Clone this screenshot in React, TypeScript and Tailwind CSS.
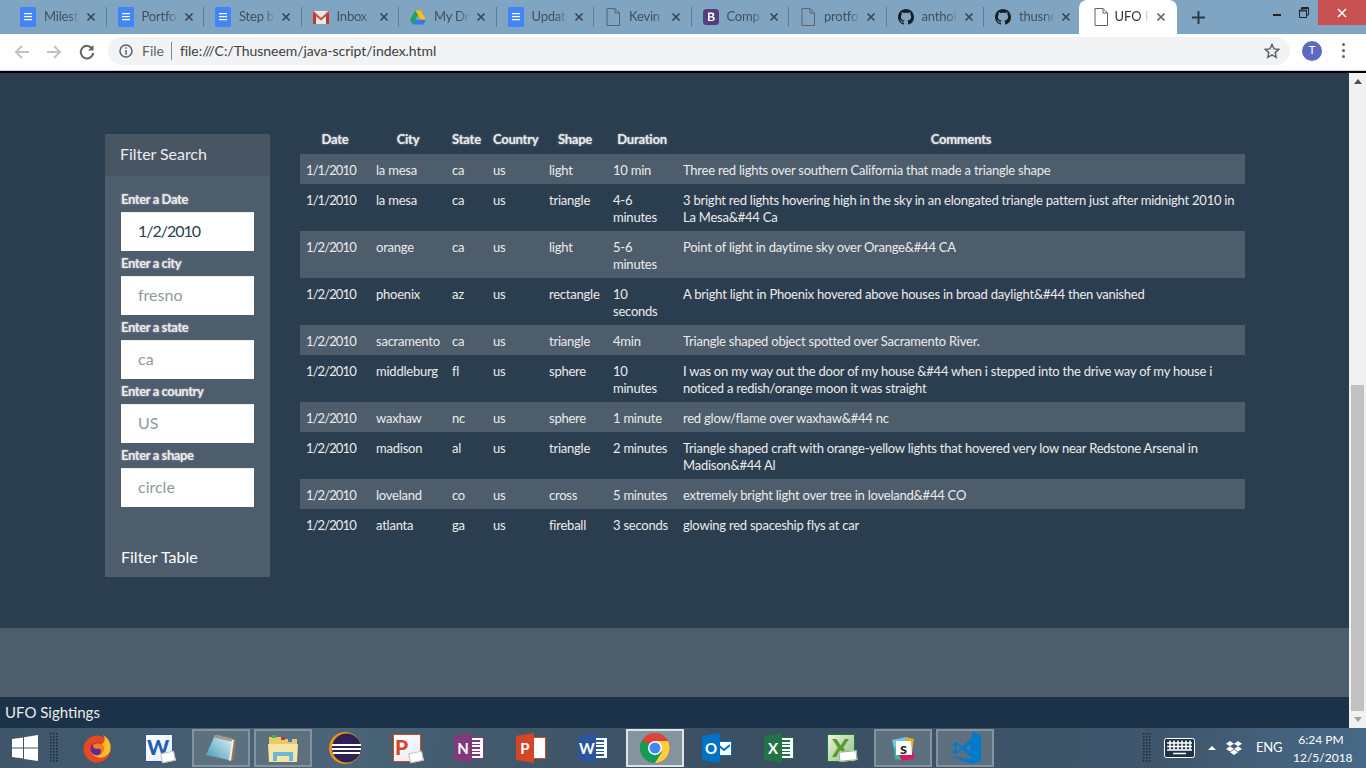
import { ReactNode } from "react";

const FONT = "font-['Lato','Noto_Sans',sans-serif]";

const DocIcon = () => (
  <svg width="16" height="20" viewBox="0 0 16 20">
    <rect width="16" height="20" rx="1.5" fill="#4285f4" />
    <path d="M4 6h8v1.2H4zM4 9h8v1.2H4zM4 12h8v1.2H4z" fill="#fff" />
  </svg>
);

const GmailIcon = () => (
  <svg width="16" height="14" viewBox="0 0 16 14">
    <rect y="1" width="16" height="13" fill="#e8e8e8" />
    <path d="M0 1h2.5L8 7l5.500-6H16L8 9.500z" fill="#d8d8d8" />
    <path d="M0 14V1l3 2.500V14zM16 14V1l-3 2.500V14z" fill="#c5372c" />
    <path d="M0 1l8 7 8-7v2.500L8 10.500 0 3.500z" fill="#d44638" />
  </svg>
);

const DriveIcon = () => (
  <svg width="16" height="15" viewBox="0 0 18 16">
    <path d="M6 0h6l6 10.500h-6z" fill="#ffc107" />
    <path d="M6 0l3 5.300L3 16l-3-5.500z" fill="#1da462" />
    <path d="M6 10.500h12L15 16H3z" fill="#3b78e7" />
  </svg>
);

const FileIcon = () => (
  <svg width="14" height="18" viewBox="0 0 14 18" fill="none" stroke="#5f6368" strokeWidth="1">
    <path d="M1 .5h8l4.500 4.500v12.500H1z" />
    <path d="M9 .5v4.500h4.500" />
  </svg>
);

const BootstrapIcon = () => (
  <svg width="16" height="16" viewBox="0 0 16 16">
    <rect width="16" height="16" rx="3.500" fill="#563d7c" />
    <path d="M5 3.500h3.800c1.600 0 2.500.8 2.500 2 0 .9-.5 1.600-1.300 1.900 1.100.2 1.800 1 1.800 2.100 0 1.500-1.100 2.500-2.900 2.500H5zM6.700 5v2.200h1.600c.8 0 1.200-.4 1.200-1.100S9.100 5 8.300 5zm0 3.500V11h1.900c.9 0 1.300-.5 1.300-1.300s-.5-1.200-1.400-1.200z" fill="#fff" />
  </svg>
);

const GithubIcon = () => (
  <svg width="16" height="16" viewBox="0 0 16 16" fill="#1b1f23">
    <path d="M8 0C3.580 0 0 3.580 0 8c0 3.540 2.290 6.530 5.470 7.590.4.070.55-.17.55-.38 0-.19-.01-.82-.01-1.490-2.010.37-2.530-.49-2.690-.94-.09-.23-.48-.94-.82-1.130-.28-.15-.68-.52-.01-.53.63-.01 1.080.58 1.230.82.720 1.210 1.870.87 2.330.66.070-.52.280-.87.510-1.070-1.780-.2-3.640-.89-3.640-3.950 0-.87.310-1.590.820-2.150-.08-.2-.36-1.020.08-2.120 0 0 .67-.21 2.200.82.640-.18 1.320-.27 2-.27s1.360.09 2 .27c1.530-1.040 2.200-.82 2.200-.82.440 1.100.16 1.920.08 2.120.51.560.820 1.270.820 2.150 0 3.070-1.870 3.750-3.650 3.950.29.250.54.730.54 1.480 0 1.070-.01 1.930-.01 2.200 0 .21.150.46.550.38A8.010 8.010 0 0 0 16 8c0-4.420-3.580-8-8-8z" />
  </svg>
);

// titles are cut to what the tab strip shows
const tabs: { title: string; icon: ReactNode }[] = [
  { title: "Milest", icon: <DocIcon /> },
  { title: "Portfo", icon: <DocIcon /> },
  { title: "Step b", icon: <DocIcon /> },
  { title: "Inbox", icon: <GmailIcon /> },
  { title: "My Dr", icon: <DriveIcon /> },
  { title: "Updat", icon: <DocIcon /> },
  { title: "Kevin", icon: <FileIcon /> },
  { title: "Comp", icon: <BootstrapIcon /> },
  { title: "protfo", icon: <FileIcon /> },
  { title: "anthoi", icon: <GithubIcon /> },
  { title: "thusne", icon: <GithubIcon /> },
];

const sightings = [
  ["1/1/2010", "la mesa", "ca", "us", "light", "10 min", "Three red lights over southern California that made a triangle shape"],
  ["1/1/2010", "la mesa", "ca", "us", "triangle", "4-6 minutes", "3 bright red lights hovering high in the sky in an elongated triangle pattern just after midnight 2010 in La Mesa&#44 Ca"],
  ["1/2/2010", "orange", "ca", "us", "light", "5-6 minutes", "Point of light in daytime sky over Orange&#44 CA"],
  ["1/2/2010", "phoenix", "az", "us", "rectangle", "10 seconds", "A bright light in Phoenix hovered above houses in broad daylight&#44 then vanished"],
  ["1/2/2010", "sacramento", "ca", "us", "triangle", "4min", "Triangle shaped object spotted over Sacramento River."],
  ["1/2/2010", "middleburg", "fl", "us", "sphere", "10 minutes", "I was on my way out the door of my house &#44 when i stepped into the drive way of my house i noticed a redish/orange moon it was straight"],
  ["1/2/2010", "waxhaw", "nc", "us", "sphere", "1 minute", "red glow/flame over waxhaw&#44 nc"],
  ["1/2/2010", "madison", "al", "us", "triangle", "2 minutes", "Triangle shaped craft with orange-yellow lights that hovered very low near Redstone Arsenal in Madison&#44 Al"],
  ["1/2/2010", "loveland", "co", "us", "cross", "5 minutes", "extremely bright light over tree in loveland&#44 CO"],
  ["1/2/2010", "atlanta", "ga", "us", "fireball", "3 seconds", "glowing red spaceship flys at car"],
];

const columns = [
  { name: "Date", width: "w-[70px]" },
  { name: "City", width: "w-[76px]" },
  { name: "State", width: "w-[41px]" },
  { name: "Country", width: "w-[56px]" },
  { name: "Shape", width: "w-[64px]" },
  { name: "Duration", width: "w-[70px]" },
  { name: "Comments", width: "w-[568px]" },
];

const filters = [
  { label: "Enter a Date", value: "1/2/2010" },
  { label: "Enter a city", placeholder: "fresno" },
  { label: "Enter a state", placeholder: "ca" },
  { label: "Enter a country", placeholder: "US" },
  { label: "Enter a shape", placeholder: "circle" },
];

function Tab({ title, icon }: { title: string; icon: ReactNode }) {
  return (
    <div className="w-[97.5px] h-[34px] flex items-center shrink-0">
      <div className="w-[27px] pl-[11px] flex justify-center shrink-0">{icon}</div>
      <span className="ml-[8px] w-[36px] whitespace-nowrap text-[13px] tracking-[-0.2px] text-[#44505c] [mask-image:linear-gradient(to_right,#000_70%,transparent)]">
        {title}
      </span>
      <span className="ml-[6px]">
        <svg width="10" height="10" viewBox="0 0 10 10" stroke="#3c4650" strokeWidth="1.700">
          <path d="M1.500 1.500l7 7M8.500 1.500l-7 7" />
        </svg>
      </span>
      <div className="ml-auto w-px h-[20px] bg-[#5f7d96]" />
    </div>
  );
}

function TabBar() {
  return (
    <div className="h-[34px] bg-[#7fa5c3] flex pl-[9px]">
      {tabs.map((t) => (
        <Tab key={t.title} {...t} />
      ))}
      <div className="w-[98px] h-[34px] -ml-[3px] bg-white rounded-t-[8px] flex items-center shrink-0">
        <div className="ml-[15px] w-[14px] shrink-0">
          <FileIcon />
        </div>
        <span className="ml-[7px] w-[34px] whitespace-nowrap text-[13px] text-[#333] [mask-image:linear-gradient(to_right,#000_70%,transparent)]">
          UFO F
        </span>
        <span className="ml-[7px]">
          <svg width="10" height="10" viewBox="0 0 10 10" stroke="#5f6368" strokeWidth="1.700">
            <path d="M1.500 1.500l7 7M8.500 1.500l-7 7" />
          </svg>
        </span>
      </div>
      <div className="ml-[15px] h-[34px] flex items-center">
        <svg width="13" height="13" viewBox="0 0 13 13" stroke="#2f3a44" strokeWidth="2">
          <path d="M6.500 0v13M0 6.500h13" />
        </svg>
      </div>
      <div className="flex-1" />
      <div className="flex items-start h-[25px]">
        <div className="w-[26px] h-[25px] flex items-center justify-center">
          <div className="w-[8px] h-[2px] bg-[#222] mt-[5px]" />
        </div>
        <div className="ml-[6px] w-[15px] h-[25px] flex items-center justify-center">
          <svg width="10" height="11" viewBox="0 0 10 11" fill="none" stroke="#222" strokeWidth="1">
            <path d="M.5 3h7v7.500h-7zM.5 4h7M2.500 3V.5h7V8H7.500M2.500 1.500h7" />
          </svg>
        </div>
        <div className="ml-[7px] w-[48px] h-[25px] bg-[#c75050] flex items-center justify-center">
          <svg width="10" height="10" viewBox="0 0 10 10" stroke="#fff" strokeWidth="1.500">
            <path d="M1 1l8 8M9 1l-8 8" />
          </svg>
        </div>
      </div>
    </div>
  );
}

function Toolbar() {
  return (
    <div className="h-[37px] bg-white border-b border-[#d0d2d4] flex items-center">
      <div className="w-[108px] flex items-center shrink-0">
        <svg className="ml-[14px]" width="16" height="16" viewBox="0 0 16 16" fill="none" stroke="#c0c2c5" strokeWidth="2">
          <path d="M15 8H2M8 2L2 8l6 6" />
        </svg>
        <svg className="ml-[16px]" width="16" height="16" viewBox="0 0 16 16" fill="none" stroke="#c0c2c5" strokeWidth="2">
          <path d="M1 8h13M8 2l6 6-6 6" />
        </svg>
        <svg className="ml-[17px]" width="16" height="16" viewBox="0 0 16 16" fill="none" stroke="#5f6368" strokeWidth="2">
          <path d="M13.500 5A6.300 6.300 0 1 0 14.300 9" />
          <path d="M14.500 1v5.500H9z" fill="#5f6368" stroke="none" />
        </svg>
      </div>
      <div className="w-[1182px] h-[28px] rounded-full bg-[#f1f3f4] flex items-center mt-[-3px] shrink-0">
        <svg className="ml-[11px]" width="14" height="14" viewBox="0 0 14 14" fill="none" stroke="#5f6368" strokeWidth="1.500">
          <circle cx="7" cy="7" r="6" />
          <path d="M7 6v4.500M7 3.300v1.500" />
        </svg>
        <span className="ml-[9px] text-[14px] text-[#5f6368]">File</span>
        <div className="ml-[7px] w-px h-[18px] bg-[#80868b]" />
        <span className="ml-[8px] text-[14px] tracking-[-0.05px] text-[#3c4043]">file:///C:/Thusneem/java-script/index.html</span>
        <div className="flex-1" />
        <svg className="mr-[10px]" width="16" height="16" viewBox="0 0 16 16" fill="none" stroke="#5f6368" strokeWidth="1.500">
          <path d="M8 1.500l2 4.400 4.800.5-3.600 3.200 1 4.700L8 11.900l-4.200 2.400 1-4.700L1.200 6.400 6 5.900z" />
        </svg>
      </div>
      <div className="ml-[12px] w-[20px] h-[20px] mt-[-3px] rounded-full bg-[#5c6bc0] flex items-center justify-center text-[11px] text-white">
        T
      </div>
      <div className="ml-[20px] mt-[-3px] flex flex-col gap-[3px]">
        <div className="w-[3px] h-[3px] rounded-full bg-[#5f6368]" />
        <div className="w-[3px] h-[3px] rounded-full bg-[#5f6368]" />
        <div className="w-[3px] h-[3px] rounded-full bg-[#5f6368]" />
      </div>
    </div>
  );
}

function FilterPanel() {
  return (
    <aside className="w-[165px] mt-[61px] h-[443px] bg-[#4e5d6c] shrink-0">
      <div className="h-[42px] bg-[#485563] pl-[15px] pb-[2px] flex items-center text-[16px] tracking-[-0.05px] text-[#ebebeb]">Filter Search</div>
      <div className="pl-[16px] pt-[11px]">
        {filters.map((f) => (
          <div key={f.label}>
            <label className="block h-[25px] leading-[25px] text-[13px] tracking-[-0.4px] font-bold text-[#ebebeb] [text-shadow:0_0_2px_#fff8]">{f.label}</label>
            <input
              className={
                f.value
                  ? "block w-[133px] h-[39px] bg-white pl-[17px] pb-[2px] text-[16px] tracking-[-1px] text-[#2b3e50] shadow-[inset_0_1px_1px_rgba(0,0,0,0.075)] outline-none"
                  : "block w-[133px] h-[39px] bg-white pl-[17px] pb-[2px] text-[16px] text-[#2b3e50] placeholder:text-[#8f98a3] shadow-[inset_0_1px_1px_rgba(0,0,0,0.075)] outline-none"
              }
              defaultValue={f.value}
              placeholder={f.placeholder}
            />
          </div>
        ))}
        <button className="block mt-[40px] leading-[20px] text-[16px] text-white">Filter Table</button>
      </div>
    </aside>
  );
}

function SightingsTable() {
  return (
    <table className="ml-[30px] mt-[51px] w-[945px] table-fixed border-collapse text-[13px] tracking-[-0.23px] leading-[17px] text-[#ebebeb] shrink-0">
      <thead>
        <tr>
          {columns.map((c) => (
            <th key={c.name} className={`${c.width} h-[30px] px-[6px] text-center font-bold whitespace-nowrap [text-shadow:0_0_2px_#fff8]`}>
              {c.name}
            </th>
          ))}
        </tr>
      </thead>
      <tbody>
        {sightings.map((row, i) => (
          <tr key={i} className={i % 2 === 0 ? "bg-[#4e5d6c]" : ""}>
            {row.map((cell, j) => (
              <td key={j} className={j === 0 ? "px-[6px] pt-[8px] pb-[5px] align-top tracking-[-0.9px]" : "px-[6px] pt-[8px] pb-[5px] align-top"}>
                {cell}
              </td>
            ))}
          </tr>
        ))}
      </tbody>
    </table>
  );
}

function Scrollbar() {
  return (
    <div className="w-[17px] bg-[#f1f1f1] flex flex-col items-center shrink-0">
      <div className="h-[14px] flex items-center">
        <div className="w-0 h-0 mt-[2px] border-x-[4px] border-x-transparent border-b-[5px] border-b-[#505050]" />
      </div>
      <div className="w-[13px] h-[326px] mt-[298px] bg-[#c1c1c1]" />
      <div className="h-[17px] flex items-center">
        <div className="w-0 h-0 border-x-[4px] border-x-transparent border-t-[5px] border-t-[#a3a3a3]" />
      </div>
    </div>
  );
}

const Gripper = () => (
  <svg width="8" height="30" viewBox="0 0 8 30" fill="#1c2a36">
    {[0, 1, 2, 3, 4, 5, 6, 7, 8, 9].map((r) => (
      <g key={r}>
        <rect x="0" y={r * 3} width="1.500" height="1.500" />
        <rect x="3" y={r * 3} width="1.500" height="1.500" />
        <rect x="6" y={r * 3} width="1.500" height="1.500" />
      </g>
    ))}
  </svg>
);

const Firefox = () => (
  <svg width="30" height="30" viewBox="0 0 30 30">
    <circle cx="15" cy="16" r="13.500" fill="#e8481f" />
    <path d="M28.500 16A13.500 13.500 0 0 0 21 2c3 3 2 7-1 9-2 2-6 1-7 3s2 4 5 3c-1 3-6 4-9 2 3 6 11 7 15 4 3-2 4.500-5 4.500-7z" fill="#ffbd2e" />
    <circle cx="15" cy="16" r="6.500" fill="#5a2a9e" />
    <path d="M11 12c3-3 9-2 11 2 1 4-2 8-6 8 3-1 4-4 2-6-2-1-5 1-7-2z" fill="#ff7a18" />
  </svg>
);

const OldOffice = ({ color, letter, accent }: { color: string; letter: string; accent: string }) => (
  <div className={`relative w-[28px] h-[28px] bg-gradient-to-br from-white to-[#e6ebf2] border ${accent}`}>
    <span className={`absolute left-[1px] top-[0px] text-[21px] leading-[24px] font-black ${color}`}>{letter}</span>
    <div className="absolute right-[-3px] bottom-[-1px] w-[14px] h-[10px] bg-white border border-[#bbb] -rotate-12" />
  </div>
);

const Notepad = () => (
  <svg width="32" height="30" viewBox="0 0 32 30">
    <defs>
      <linearGradient id="np" x1="0" y1="1" x2="1" y2="0">
        <stop offset="0" stopColor="#3d9bb5" />
        <stop offset="1" stopColor="#e6f3f6" />
      </linearGradient>
    </defs>
    <path d="M12 1l19 5-2 21-4 1z" fill="#8b7a55" />
    <path d="M12 3l17 4-3 21-3-1z" fill="#eeeeea" />
    <path d="M10 2l17 4-3 21L1 22z" fill="url(#np)" />
    <path d="M10 2l17 4-.5 2.500L9 4.500z" fill="#9a9a94" />
  </svg>
);

const Explorer = () => (
  <svg width="32" height="28" viewBox="0 0 32 28">
    <path d="M2 3h12l2 2h14v22H2z" fill="#e9c96a" />
    <rect x="5" y="1" width="4" height="3" fill="#3cb54a" />
    <rect x="14" y="3" width="4" height="3" fill="#c0392b" />
    <rect x="21" y="5" width="4" height="3" fill="#2f80c9" />
    <path d="M1 10h30l-1 18H2z" fill="#f6e6a6" />
    <path d="M6 27v-9h20v9h-4v-5H10v5z" fill="#6bb8dc" />
  </svg>
);

const Eclipse = () => (
  <svg width="32" height="32" viewBox="0 0 32 32">
    <circle cx="16" cy="16" r="16" fill="#f29111" />
    <circle cx="17.500" cy="16" r="14.500" fill="#2c2255" />
    <path d="M3 12h29v2H3zM3 16h29v2H3zM4 20h27v2H4z" fill="#fff" />
  </svg>
);

const NewOffice = ({ color, letter, lines }: { color: string; letter: string; lines?: boolean }) => (
  <div className="relative w-[30px] h-[30px] flex items-center">
    <div className="absolute right-0 w-[17px] h-[22px] bg-white border flex flex-col justify-evenly px-[3px]" style={{ borderColor: color }}>
      {lines && [0, 1, 2, 3, 4].map((n) => <div key={n} className="h-[1.500px]" style={{ background: color }} />)}
    </div>
    <div className="absolute left-0 w-[18px] h-[30px] flex items-center justify-center text-white font-bold text-[15px] [clip-path:polygon(0_10%,100%_0,100%_100%,0_90%)]" style={{ background: color }}>
      {letter}
    </div>
  </div>
);

const Chrome = () => (
  <svg width="30" height="30" viewBox="0 0 30 30">
    <circle cx="15" cy="15" r="15" fill="#db4437" />
    <path d="M15 15L2 7.500A15 15 0 0 0 15 30l7-11z" fill="#0f9d58" />
    <path d="M15 8h13a15 15 0 0 1-13 22l7-11z" fill="#ffcd40" />
    <circle cx="15" cy="15" r="7" fill="#fff" />
    <circle cx="15" cy="15" r="5.500" fill="#4285f4" />
  </svg>
);

const Outlook = () => (
  <div className="relative w-[30px] h-[30px] flex items-center">
    <div className="absolute right-0 w-[16px] h-[15px] bg-white border border-[#0072c6] flex items-center justify-center">
      <svg width="12" height="9" viewBox="0 0 12 9" fill="none" stroke="#0072c6" strokeWidth="2">
        <path d="M0 1l6 5 6-5" />
      </svg>
    </div>
    <div className="absolute left-0 w-[18px] h-[30px] bg-[#0072c6] flex items-center justify-center text-white font-bold text-[15px] [clip-path:polygon(0_10%,100%_0,100%_100%,0_90%)]">
      O
    </div>
  </div>
);

const OldExcel = () => (
  <div className="relative w-[28px] h-[28px] bg-gradient-to-br from-[#e8f3e2] to-[#8cc37b] border border-[#1f7a3a]">
    <span className="absolute left-[4px] top-[-1px] text-[25px] leading-[26px] font-black text-[#5a9a2a]">X</span>
    <div className="absolute right-[-3px] bottom-[0px] w-[18px] h-[10px] bg-white border border-[#9a9] -rotate-6" />
  </div>
);

const Slack = () => (
  <svg width="25" height="25" viewBox="0 0 25 25">
    <path d="M1 4l14-3 2 8-14 3z" fill="#6ecadc" />
    <path d="M15 1l8 2-2 13-6-1z" fill="#e9a820" />
    <path d="M3 12l5-1 3 13-7-1z" fill="#3eb991" />
    <path d="M8 19l14-3 2 6-13 3z" fill="#e01563" />
    <path d="M5 5l15 0 1 14-16 0z" fill="#fff" />
    <text x="12.500" y="18" textAnchor="middle" fontSize="16" fontWeight="700" fill="#222" fontFamily="Lato">s</text>
  </svg>
);

const VSCode = () => (
  <svg width="32" height="32" viewBox="0 0 32 32" fill="#007acc">
    <path d="M23 0l9 3.500v25L23 32 1 24.500l22 2.500V0z" />
    <path d="M3 12l4-2 6 4.500L23 6v20l-10-8.500L7 22l-4-2 4.500-4z" />
    <path d="M8 12.500v7l4-3.500zM17 16l4 3v-7z" fill="#5c7689" />
  </svg>
);

const taskbarItems: { id: string; node: ReactNode; state?: "open" | "active" }[] = [
  { id: "firefox", node: <Firefox /> },
  { id: "word-old", node: <OldOffice color="text-[#1f5fb4]" letter="W" accent="border-[#2b579a]" /> },
  { id: "notepad", node: <Notepad />, state: "open" },
  { id: "explorer", node: <Explorer />, state: "open" },
  { id: "eclipse", node: <Eclipse /> },
  { id: "ppt-old", node: <OldOffice color="text-[#d24726]" letter="P" accent="border-[#d24726]" /> },
  { id: "onenote", node: <NewOffice color="#80397b" letter="N" lines /> },
  { id: "ppt", node: <NewOffice color="#d24726" letter="P" /> },
  { id: "word", node: <NewOffice color="#2b579a" letter="W" lines /> },
  { id: "chrome", node: <Chrome />, state: "active" },
  { id: "outlook", node: <Outlook /> },
  { id: "excel", node: <NewOffice color="#217346" letter="X" lines /> },
  { id: "excel-old", node: <OldExcel /> },
  { id: "slack", node: <Slack />, state: "open" },
  { id: "vscode", node: <VSCode />, state: "open" },
];

function Taskbar() {
  return (
    <div className="h-[40px] bg-[linear-gradient(100deg,#3f566a_0%,#4a6579_25%,#43596c_35%,#3b4f62_55%,#3f566c_85%,#486a88_100%)] flex items-center">
      <div className="w-[50px] flex justify-center">
        <svg width="26" height="26" viewBox="0 0 26 26" fill="#fff">
          <path d="M0 4l11-1.500V12.500H0zM12 2.300L26 0v12.500H12zM0 13.500h11V23.500L0 22zM12 13.500h14V26l-14-2z" />
        </svg>
      </div>
      <Gripper />
      <div className="w-[8px]" />
      {taskbarItems.map((t) => (
        <div
          key={t.id}
          className={
            t.state === "active"
              ? "w-[58px] h-[38px] mx-[2px] flex items-center justify-center border-2 border-[#dfe3e6] bg-[#84949f]"
              : t.state === "open"
                ? "w-[58px] h-[38px] mx-[2px] flex items-center justify-center border-2 border-[#84939e] bg-[#5d7080]"
                : "w-[62px] h-[38px] flex items-center justify-center"
          }
        >
          {t.node}
        </div>
      ))}
      <div className="flex-1" />
      <Gripper />
      <svg className="ml-[13px]" width="31" height="20" viewBox="0 0 31 20" fill="none" stroke="#fff">
        <rect x="0.500" y="0.500" width="30" height="19" rx="2" fill="#1e3346" />
        <path d="M3 5h25M3 8.500h25M3 12h25M9 15.500h13M6 2.500v10M10 2.500v10M14 2.500v10M18 2.500v10M22 2.500v10M26 2.500v10" strokeWidth="1.500" />
      </svg>
      <div className="ml-[13px] w-0 h-0 border-x-[4px] border-x-transparent border-b-[4px] border-b-white" />
      <svg className="ml-[10px]" width="16" height="14" viewBox="0 0 16 14" fill="#fff">
        <path d="M4 0L0 2.700l4 2.600 4-2.600zM12 0L8 2.700l4 2.600 4-2.600zM0 8l4 2.600L8 8 4 5.300zM12 5.300L8 8l4 2.600L16 8zM4 11.300L8 14l4-2.700L8 8.700z" />
      </svg>
      <span className="ml-[14px] w-[25px] text-[13px] tracking-[-0.2px] text-white">ENG</span>
      <div className="ml-[12px] w-[56px] mr-[17px] pt-[2px] text-center text-[12px] leading-[18px] text-white">
        <div>6:24 PM</div>
        <div>12/5/2018</div>
      </div>
    </div>
  );
}

export default function App() {
  return (
    <div className={`${FONT} w-[1366px] h-[768px] overflow-hidden flex flex-col`}>
      <TabBar />
      <Toolbar />
      <div className="h-[2px] bg-black" />
      <div className="h-[655px] flex">
        <div className="flex-1 flex flex-col min-w-0">
          <main className="h-[555px] bg-[#2b3e50] pl-[105px] flex items-start">
            <FilterPanel />
            <SightingsTable />
          </main>
          <div className="h-[69px] bg-[#4e5d6c]" />
          <div className="h-[31px] bg-[#1c3249] pl-[5px] flex items-center text-[15px] text-[#ebebeb]">UFO Sightings</div>
        </div>
        <Scrollbar />
      </div>
      <Taskbar />
    </div>
  );
}
